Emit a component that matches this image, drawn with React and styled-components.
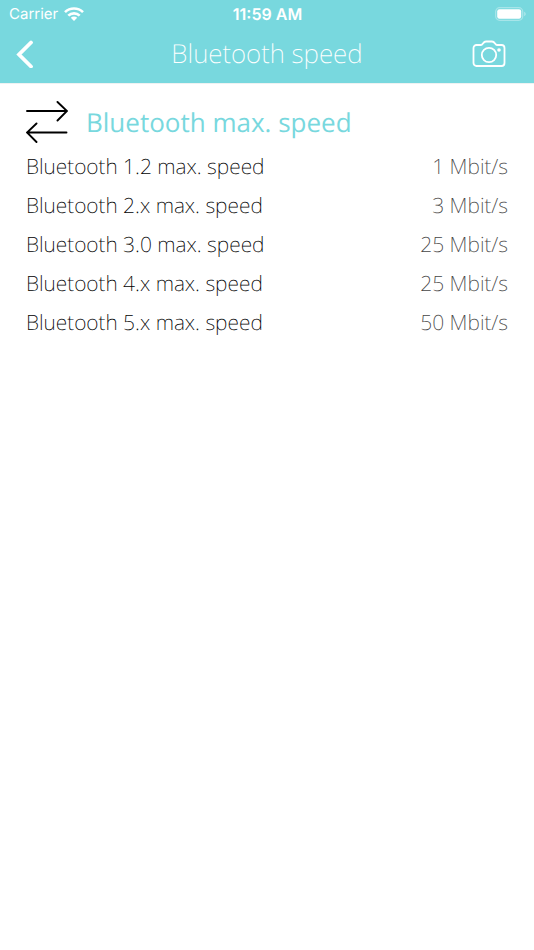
import React from "react";
import styled, { createGlobalStyle } from "styled-components";

const Global = createGlobalStyle`
  *, *::before, *::after { box-sizing: border-box; }
  body {
    margin: 0;
    background: #fff;
    font-family: "Noto Sans", "Open Sans", sans-serif;
    text-rendering: geometricPrecision;
  }
`;

const Page = styled.div`
  min-height: 100vh;
  background: #fff;
`;

const Top = styled.header`
  background: #78d8de;
  color: #fff;
  box-shadow: 0 1px 0 #eef2f2;
`;

const StatusBar = styled.div`
  display: grid;
  grid-template-columns: 1fr auto 1fr;
  align-items: center;
  height: 27px;
  padding: 0 8px 0 9px;
  font-family: Inter, sans-serif;
  font-size: 16px;
`;

const Carrier = styled.div`
  display: flex;
  align-items: center;
  gap: 6px;
  font-size: 15px;
`;

const Clock = styled.time`
  font-weight: 600;
`;

const Battery = styled.svg`
  justify-self: end;
`;

const NavBar = styled.div`
  display: grid;
  grid-template-columns: 48px 1fr 48px;
  align-items: center;
  height: 56px;
  padding: 0 16px 4px;
`;

const NavButton = styled.button`
  display: flex;
  align-items: center;
  justify-content: ${(p) => (p.$end ? "flex-end" : "flex-start")};
  height: 44px;
  padding: ${(p) => (p.$end ? "2px 12px 0 0" : "2px 0 0")};
  border: 0;
  background: none;
  color: inherit;
  cursor: pointer;
`;

const Title = styled.h1`
  margin: 0;
  text-align: center;
  font-size: 26px;
  line-height: 36px;
  font-weight: 200;
`;

const Content = styled.main`
  padding: 14px 26px;
`;

const SectionHead = styled.div`
  display: flex;
  align-items: center;
  gap: 18px;
  height: 50px;
`;

const SectionTitle = styled.h2`
  margin: 0;
  color: #78d8de;
  font-family: "Open Sans", sans-serif;
  font-size: 26px;
  line-height: 36px;
  font-weight: 400;
`;

const Specs = styled.dl`
  margin: 0;
`;

const Row = styled.div`
  display: flex;
  justify-content: space-between;
  align-items: center;
  height: 39px;
  font-size: 21px;
  font-weight: 200;
`;

const Name = styled.dt`
  color: #000;
`;

const Value = styled.dd`
  margin: 0;
  color: #444;
`;

const speeds = [
  ["Bluetooth 1.2 max. speed", "1 Mbit/s"],
  ["Bluetooth 2.x max. speed", "3 Mbit/s"],
  ["Bluetooth 3.0 max. speed", "25 Mbit/s"],
  ["Bluetooth 4.x max. speed", "25 Mbit/s"],
  ["Bluetooth 5.x max. speed", "50 Mbit/s"],
];

export default function App() {
  return (
    <Page>
      <Global />
      <Top>
        <StatusBar>
          <Carrier>
            Carrier
            <svg width="20" height="14" viewBox="0 0 20 14" fill="none" stroke="#fff" strokeWidth="2.6" aria-hidden="true">
              <path d="M1 5.2a12.8 12.8 0 0 1 18 0" />
              <path d="M4.3 8.7a8.1 8.1 0 0 1 11.4 0" />
              <path d="M10 14L6.8 10.8a4.5 4.5 0 0 1 6.4 0z" fill="#fff" stroke="none" />
            </svg>
          </Carrier>
          <Clock>11:59 AM</Clock>
          <Battery width="31" height="14" viewBox="0 0 31 14" fill="none" aria-label="Battery full">
            <rect x="0.7" y="0.7" width="27" height="12.6" rx="4" stroke="#fff" strokeOpacity="0.35" strokeWidth="1.3" />
            <rect x="2.2" y="2.2" width="24" height="9.6" rx="2.2" fill="#fff" />
            <path d="M29.2 4.8v4.4c1-.4 1.5-1.2 1.5-2.2s-.5-1.8-1.5-2.2z" fill="#fff" fillOpacity="0.4" />
          </Battery>
        </StatusBar>
        <NavBar>
          <NavButton aria-label="Back">
            <svg width="18" height="28" viewBox="0 0 18 28" fill="none" stroke="#fff" strokeWidth="3.8" strokeLinecap="round">
              <path d="M15 2.5L3 14.5l12 12" />
            </svg>
          </NavButton>
          <Title>Bluetooth speed</Title>
          <NavButton $end aria-label="Take screenshot">
            <svg width="34" height="28" viewBox="0 0 34 28" fill="none" stroke="#fff" strokeWidth="1.8">
              <path d="M4.5 5H9c2 0 2-3.5 5-3.5h6c3 0 3 3.5 5 3.5h4.5a3 3 0 0 1 3 3v15a3 3 0 0 1-3 3h-25a3 3 0 0 1-3-3V8a3 3 0 0 1 3-3z" />
              <circle cx="17" cy="15" r="7.2" />
              <circle cx="27" cy="10" r="1.8" fill="#fff" stroke="none" />
            </svg>
          </NavButton>
        </NavBar>
      </Top>
      <Content>
        <SectionHead>
          <svg width="42" height="42" viewBox="0 0 42 42" fill="none" stroke="#000" strokeWidth="1.9" strokeLinecap="round" aria-hidden="true">
            <path d="M1 10h40M31.5 1l9.5 9-9.5 9.5M40.5 31.5H1M10.5 22.5L1 31.5l9.5 9.5" />
          </svg>
          <SectionTitle>Bluetooth max. speed</SectionTitle>
        </SectionHead>
        <Specs>
          {speeds.map(([name, value]) => (
            <Row key={name}>
              <Name>{name}</Name>
              <Value>{value}</Value>
            </Row>
          ))}
        </Specs>
      </Content>
    </Page>
  );
}
